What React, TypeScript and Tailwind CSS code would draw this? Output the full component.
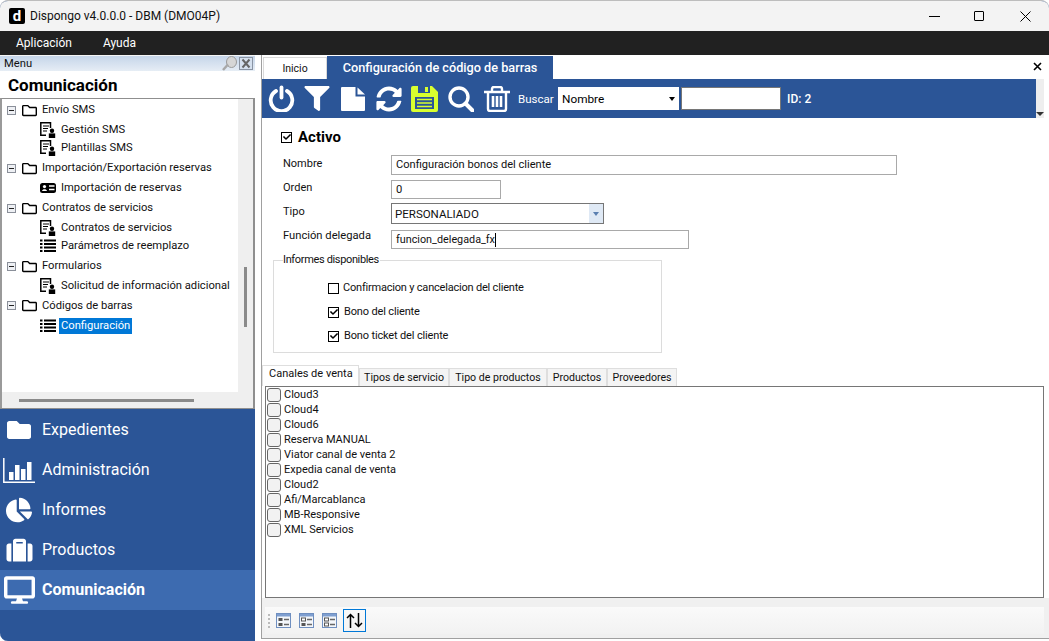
import React from "react";
import { FaFilter, FaSyncAlt, FaFolder, FaChartPie, FaSuitcase, FaDesktop, FaRegFolder, FaCheck } from "react-icons/fa";

function DocUser() {
  return (
    <svg width="16" height="16" viewBox="0 0 16 16" className="shrink-0">
      <path d="M10.5 6V.8H.8v12.4H6" fill="none" stroke="#000" strokeWidth="1.5" />
      <path d="M3 4h6M3 6.5h5M3 9h4" stroke="#000" strokeWidth="1.2" />
      <circle cx="12" cy="8.8" r="2.2" fill="#000" />
      <rect x="8.8" y="11.4" width="6.4" height="4.6" fill="#000" />
    </svg>
  );
}
function ListIcon() {
  return (
    <svg width="16" height="14" viewBox="0 0 16 14" className="shrink-0">
      <path d="M0 1.5h2.5M4 1.5h12M0 5h2.5M4 5h12M0 8.5h2.5M4 8.5h12M0 12h2.5M4 12h12" stroke="#000" strokeWidth="2.2" />
    </svg>
  );
}
function CardIcon() {
  return (
    <svg width="16" height="10" viewBox="0 0 16 10" className="shrink-0">
      <rect width="16" height="10" rx="2.5" fill="#000" />
      <circle cx="4.5" cy="3.6" r="1.6" fill="#fff" />
      <path d="M2 8c.4-2.4 4.6-2.4 5 0z" fill="#fff" />
      <path d="M9 3h5.5M9 6.5h5.5" stroke="#fff" strokeWidth="1.3" />
    </svg>
  );
}
function Minus() {
  return (
    <span className="flex h-[9px] w-[9px] shrink-0 items-center justify-center border border-[#8a8f99] bg-[#eef0f4]">
      <span className="h-px w-[5px] bg-[#222]" />
    </span>
  );
}
function Group({ label, h }: { label: string; h: string }) {
  return (
    <div className={`flex items-center pl-[5px] ${h}`}>
      <Minus />
      <FaRegFolder className="ml-[6px] h-[15px] w-[15px] text-black" />
      <span className="ml-[5px] whitespace-nowrap">{label}</span>
    </div>
  );
}
function Leaf({ label, icon, h, sel }: { label: string; icon: React.ReactNode; h: string; sel?: boolean }) {
  return (
    <div className={`flex items-center ${h}`}>
      <span className="ml-[38px] flex w-[16px] items-center justify-center">{icon}</span>
      <span className={`ml-[3px] whitespace-nowrap px-[2px] leading-[16px] ${sel ? "bg-[#0078d7] text-white" : ""}`}>{label}</span>
    </div>
  );
}
function NavItem({ label, icon, active }: { label: string; icon: React.ReactNode; active?: boolean }) {
  return (
    <div className={`flex h-[40px] items-center text-[16px] text-white ${active ? "bg-[#3d6bb0] font-bold" : ""}`}>
      <span className="ml-[2px] flex w-[34px] justify-center">{icon}</span>
      <span className="ml-[6px]">{label}</span>
    </div>
  );
}
function Field({ label, className, labelClass, children }: { label: string; className: string; labelClass?: string; children: React.ReactNode }) {
  return (
    <div className={`flex ${className}`}>
      <span className={`w-[108px] shrink-0 leading-[16px] ${labelClass ?? ""}`}>{label}</span>
      {children}
    </div>
  );
}
function Check({ on }: { on?: boolean }) {
  return (
    <span className="flex h-[11px] w-[11px] shrink-0 items-center justify-center border border-black bg-white">
      {on && <FaCheck className="h-[8px] w-[8px] text-black" />}
    </span>
  );
}
function Sub({ label, w }: { label: string; w: string }) {
  return (
    <div className={`flex h-[18px] items-center justify-center whitespace-nowrap border border-b-0 border-[#dedede] bg-[#f4f4f4] text-[10.6px] ${w}`}>
      {label}
    </div>
  );
}
function ViewIcon({ variant }: { variant: number }) {
  return (
    <svg width="15" height="15" viewBox="0 0 15 15">
      <rect x=".5" y=".5" width="14" height="14" fill="#f4f7fb" stroke="#6f8fc0" />
      <rect x="1" y="1" width="13" height="2.5" fill="#7f9fd0" />
      <rect x="2.5" y="5" width="4" height="3" fill={variant === 0 ? "#555" : "#fff"} stroke="#555" strokeWidth={variant === 0 ? 0 : 1} />
      <rect x="2.5" y="10" width="4" height="3" fill={variant === 2 ? "#fff" : "#555"} stroke="#555" strokeWidth={variant === 2 ? 1 : 0} />
      <path d="M8 6.5h5M8 11.5h5" stroke="#666" strokeWidth="1.5" />
    </svg>
  );
}

const channels = ["Cloud3", "Cloud4", "Cloud6", "Reserva MANUAL", "Viator canal de venta 2", "Expedia canal de venta", "Cloud2", "Afi/Marcablanca", "MB-Responsive", "XML Servicios"];

export default function App() {
  return (
    <div className="flex h-[641px] w-[1049px] flex-col overflow-hidden rounded-t-[8px] rounded-bl-[8px] border-t border-[#bdbdbd] bg-[#2b5597] [font-family:Roboto,'Liberation_Sans',sans-serif] text-[11.2px] leading-[16px] text-[#111]">
      <div className="flex h-[30px] shrink-0 items-center bg-[#f3f3f3]">
        <span className="ml-[9px] flex h-[16px] w-[16px] items-center justify-center rounded-[2px] bg-black text-[15px] font-bold leading-none text-white">d</span>
        <span className="ml-[5px] text-[12px]">Dispongo v4.0.0.0 - DBM (DMO04P)</span>
        <div className="ml-auto flex items-center">
          <span className="mr-[34px] h-px w-[11px] bg-black" />
          <span className="mr-[36px] h-[10px] w-[10px] rounded-[1px] border border-black" />
          <svg width="11" height="11" viewBox="0 0 11 11" className="mr-[18px]"><path d="M.5.5l10 10M10.5.5l-10 10" stroke="#000" /></svg>
        </div>
      </div>
      <div className="flex h-[24px] shrink-0 items-center bg-[#212121] text-[12px] text-white">
        <span className="ml-[16px]">Aplicación</span>
        <span className="ml-[31px]">Ayuda</span>
      </div>
      <div className="flex min-h-0 flex-1">
        <aside className="flex w-[255px] shrink-0 flex-col bg-[#f5f5f5]">
          <div className="mt-px flex h-[15px] shrink-0 items-center justify-between bg-gradient-to-b from-[#c5d5e9] to-[#e6edf5] pl-[4px] pr-[2px] leading-none">
            <span>Menu</span>
            <span className="flex items-center gap-[2px]">
              <svg width="15" height="15" viewBox="0 0 15 15"><ellipse cx="9.5" cy="6" rx="5" ry="5.5" fill="#d6d6d6" stroke="#9a9a9a" /><path d="M6 8.5L1 14" stroke="#a8a8a8" strokeWidth="2.5" /></svg>
              <svg width="14" height="13" viewBox="0 0 14 13"><rect x=".5" y=".5" width="13" height="12" fill="#d5e0ee" stroke="#8a94a3" /><path d="M3.5 2.5l7 8M10.5 2.5l-7 8" stroke="#666" strokeWidth="2" /></svg>
            </span>
          </div>
          <div className="flex h-[27px] shrink-0 items-center bg-white pl-[8px] text-[17px] font-bold text-black">Comunicación</div>
          <div className="flex h-[310px] shrink-0 flex-col border border-b-0 border-x-[2px] border-[#8f8f8f] border-l-[#9a9a9a] bg-[#efefef]">
            <div className="flex min-h-0 flex-1">
              <div className="w-[236px] bg-white pt-px">
                <Group label="Envío SMS" h="h-[20px]" />
                <Leaf label="Gestión SMS" icon={<DocUser />} h="h-[20px]" />
                <Leaf label="Plantillas SMS" icon={<DocUser />} h="h-[18px] pb-[2px]" />
                <Group label="Importación/Exportación reservas" h="h-[20px]" />
                <Leaf label="Importación de reservas" icon={<CardIcon />} h="h-[20px]" />
                <Group label="Contratos de servicios" h="h-[20px]" />
                <Leaf label="Contratos de servicios" icon={<DocUser />} h="h-[20px]" />
                <Leaf label="Parámetros de reemplazo" icon={<ListIcon />} h="h-[18px] pb-[2px]" />
                <Group label="Formularios" h="h-[20px]" />
                <Leaf label="Solicitud de información adicional" icon={<DocUser />} h="h-[19px]" />
                <Group label="Códigos de barras" h="h-[21px]" />
                <Leaf sel label="Configuración" icon={<ListIcon />} h="h-[20px]" />
              </div>
              <div className="flex flex-1 justify-center pt-[168px]"><span className="h-[60px] w-[3px] bg-[#8a8a8a]" /></div>
            </div>
            <div className="flex h-[16px] shrink-0 items-center pl-[17px]"><span className="h-[3px] w-[175px] bg-[#8a8a8a]" /></div>
          </div>
          <nav className="flex flex-1 flex-col border-t border-[#8f8f8f] bg-[#2b5597] pt-px">
            <NavItem label="Expedientes" icon={<FaFolder className="h-[24px] w-[26px]" />} />
            <NavItem label="Administración" icon={
              <svg width="32" height="25" viewBox="0 0 32 25" fill="#fff">
                <path d="M.8 0v24.2H32" fill="none" stroke="#fff" strokeWidth="1.5" />
                <rect x="6" y="14" width="4.5" height="8" />
                <rect x="12" y="7" width="4.5" height="15" />
                <rect x="18" y="11" width="4.5" height="11" />
                <rect x="24" y="4" width="4.5" height="18" />
              </svg>
            } />
            <NavItem label="Informes" icon={<FaChartPie className="h-[26px] w-[26px]" />} />
            <NavItem label="Productos" icon={<FaSuitcase className="h-[26px] w-[29px]" />} />
            <NavItem active label="Comunicación" icon={<FaDesktop className="h-[28px] w-[31px]" />} />
          </nav>
        </aside>
        <main className="flex min-w-0 flex-1 flex-col bg-white pl-[6px]">
          <div className="mb-[2px] flex h-full flex-col border-b border-l border-[#a0a0a0]">
            <div className="flex h-[24px] shrink-0 items-end pl-px">
              <div className="flex h-[22px] w-[64px] items-center justify-center border border-b-0 border-[#d9d9d9] text-[10.5px]">Inicio</div>
              <div className="flex h-[23px] w-[226px] items-center justify-center bg-[#2b5597] text-[12.7px] font-medium text-white">Configuración de código de barras</div>
              <svg width="9" height="9" viewBox="0 0 9 9" className="mb-[8px] ml-auto mr-[7px]"><path d="M1 1l7 7M8 1L1 8" stroke="#000" strokeWidth="1.6" /></svg>
            </div>
            <div className="mr-[5px] flex h-[39px] shrink-0 items-center bg-[#2b5597] pl-[6px] text-white">
              <svg width="27" height="27" viewBox="0 0 27 27" fill="none" stroke="#fff" strokeWidth="3.8" strokeLinecap="round">
                <path d="M8 6a10.8 10.8 0 1 0 11 0" />
                <path d="M13.5 2.5v10" />
              </svg>
              <FaFilter className="ml-[9px] h-[25px] w-[26px]" />
              <svg width="24" height="24" viewBox="0 0 24 24" fill="#fff" className="ml-[11px]">
                <path d="M1 0h13.5v9.5H24V23a1 1 0 0 1-1 1H1a1 1 0 0 1-1-1V1a1 1 0 0 1 1-1z" />
                <path d="M16.5 .5L24 7.5h-7.5z" />
              </svg>
              <FaSyncAlt className="ml-[11px] h-[26px] w-[26px]" />
              <svg width="27" height="26" viewBox="0 0 27 26" className="ml-[9px]">
                <path d="M2 0h19l6 6v18a2 2 0 0 1-2 2H2a2 2 0 0 1-2-2V2a2 2 0 0 1 2-2z" fill="#d9ff2e" />
                <rect x="7" y="0" width="12" height="7" fill="#2b5597" />
                <rect x="14" y="1" width="3" height="5" fill="#d9ff2e" />
                <rect x="4" y="11" width="19" height="12" fill="#2b5597" />
                <path d="M6 13.5h15M6 17h15M6 20.5h15" stroke="#d9ff2e" strokeWidth="1.6" />
              </svg>
              <svg width="26" height="26" viewBox="0 0 26 26" fill="none" stroke="#fff" className="ml-[10px]">
                <circle cx="11" cy="11" r="9" strokeWidth="3.4" />
                <path d="M17.5 17.5l7 7" strokeWidth="4" strokeLinecap="round" />
              </svg>
              <svg width="26" height="26" viewBox="0 0 26 26" fill="none" stroke="#fff" strokeWidth="2.4" className="ml-[10px]">
                <path d="M0 6h26" />
                <path d="M8 6V3q0-2 2-2h6q2 0 2 2v3" />
                <path d="M4 6v17q0 2 2 2h14q2 0 2-2V6" />
                <path d="M9 10v11M13 10v11M17 10v11" strokeWidth="2.6" />
              </svg>
              <span className="ml-[8px] w-[40px] text-[11.5px]">Buscar</span>
              <div className="flex h-[23px] w-[121px] items-center justify-between bg-white pl-[4px] pr-[4px] text-[11.8px] text-black">
                <span>Nombre</span>
                <span className="h-0 w-0 border-x-[3.5px] border-t-[4px] border-x-transparent border-t-black" />
              </div>
              <div className="ml-[2px] h-[23px] w-[100px] border border-[#767676] bg-white" />
              <span className="ml-[6px] text-[12px] font-medium">ID: 2</span>
              <div className="ml-auto flex h-full w-[8px] items-end bg-[#eee]"><span className="mb-[2px] h-0 w-0 border-x-[4px] border-t-[4px] border-x-transparent border-t-[#333]" /></div>
            </div>
            <div className="flex items-center pl-[19px] pt-[11px]">
              <Check on />
              <span className="ml-[6px] text-[15px] font-bold leading-[16px] text-black">Activo</span>
            </div>
            <div className="mt-[10px] pl-[21px]">
              <Field label="Nombre" className="" labelClass="text-[11px] pt-px">
                <div className="flex h-[20px] w-[506px] items-center border border-[#a9a9a9] pl-[4px] text-[11.1px]">Configuración bonos del cliente</div>
              </Field>
              <Field label="Orden" className="mt-[5px]" labelClass="text-[11px]">
                <div className="flex h-[19px] w-[110px] items-center border border-[#a9a9a9] pl-[4px]">0</div>
              </Field>
              <Field label="Tipo" className="mt-[4px]" labelClass="text-[11px] pt-px">
                <div className="flex h-[21px] w-[213px] items-center justify-between border border-[#767676] pl-[3px] text-[11.5px]">
                  <span>PERSONALIADO</span>
                  <span className="flex h-full w-[14px] items-center justify-center bg-[#dfe9f5]"><span className="h-0 w-0 border-x-[3.5px] border-t-[4px] border-x-transparent border-t-[#5a7fb0]" /></span>
                </div>
              </Field>
              <Field label="Función delegada" className="mt-[6px]" labelClass="-mt-[2px]">
                <div className="flex h-[19px] w-[298px] items-center border border-[#a9a9a9] pl-[4px] text-[10.8px]">funcion_delegada_fx<span className="h-[14px] w-px bg-black" /></div>
              </Field>
            </div>
            <fieldset className="ml-[11px] mt-[4px] h-[100px] w-[389px] border border-[#dcdcdc] pl-[54px] text-[11px]">
              <legend className="ml-[-45px] pr-px leading-[14px] tracking-[-0.35px]">Informes disponibles</legend>
              <div className="mt-[13px] flex items-center"><Check /><span className="ml-[4px] tracking-[-0.2px]">Confirmacion y cancelacion del cliente</span></div>
              <div className="mt-[8px] flex items-center"><Check on /><span className="ml-[5px] tracking-[-0.15px]">Bono del cliente</span></div>
              <div className="mt-[8px] flex items-center"><Check on /><span className="ml-[5px] tracking-[-0.15px]">Bono ticket del cliente</span></div>
            </fieldset>
            <div className="mt-[11px] flex h-[22px] shrink-0 items-end text-[11px]">
              <div className="flex h-[21px] w-[97px] items-center whitespace-nowrap border border-b-0 border-[#dedede] bg-white pb-[4px] pl-[6px]">Canales de venta</div>
              <Sub w="w-[90px]" label="Tipos de servicio" />
              <Sub w="w-[98px]" label="Tipo de productos" />
              <Sub w="w-[60px]" label="Productos" />
              <Sub w="w-[70px]" label="Proveedores" />
            </div>
            <div className="ml-[3px] mr-[5px] h-[212px] shrink-0 border border-[#767676] pl-px text-[11px]">
              {channels.map((c) => (
                <div key={c} className="flex h-[15px] items-center">
                  <span className="h-[14px] w-[14px] rounded-[3px] border border-[#666] bg-[#f2f2f2]" />
                  <span className="ml-[3px]">{c}</span>
                </div>
              ))}
            </div>
            <div className="flex-1 bg-[#f0f0f0] pl-[3px] pr-[5px] pt-[9px]">
              <div className="flex h-[27px] items-center bg-gradient-to-b from-[#fafafa] to-[#f2f2f2] pl-[3px]">
                <span className="mr-[6px] h-[14px] w-px border-l-2 border-dotted border-[#bbb]" />
                <ViewIcon variant={0} />
                <span className="ml-[8px]"><ViewIcon variant={1} /></span>
                <span className="ml-[8px]"><ViewIcon variant={2} /></span>
                <span className="ml-[6px] flex h-[23px] w-[23px] items-center justify-center border border-[#0078d7]">
                  <svg width="17" height="15" viewBox="0 0 17 15" fill="none" stroke="#000" strokeWidth="1.5">
                    <path d="M4.5 15V1.5M1 5l3.5-3.5L8 5" />
                    <path d="M12.5 0v13.5M9 10l3.5 3.5L16 10" />
                  </svg>
                </span>
              </div>
            </div>
          </div>
        </main>
      </div>
    </div>
  );
}
